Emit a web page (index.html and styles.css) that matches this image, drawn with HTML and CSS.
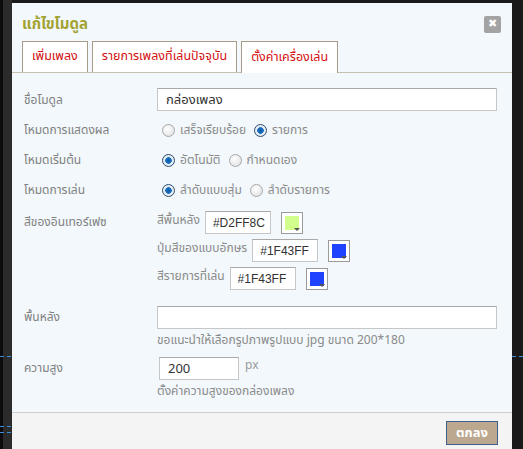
FILE: index.html
```html
<!DOCTYPE html>
<html lang="th">
<head>
    <meta charset="UTF-8">
    <title>แก้ไขโมดูล</title>
    <link rel="stylesheet" href="styles.css">
</head>
<body>

<div class="guide guide-l1"></div>
<div class="guide guide-l2"></div>
<div class="guide guide-l3"></div>
<div class="guide guide-r1"></div>

<div id="dialog">
    <div class="dlg-head">
        <span class="dlg-title">แก้ไขโมดูล</span>
        <span class="dlg-close">&#10006;</span>
    </div>

    <div class="tabs">
        <div class="tab">เพิ่มเพลง</div>
        <div class="tab">รายการเพลงที่เล่นปัจจุบัน</div>
        <div class="tab active">ตั้งค่าเครื่องเล่น</div>
    </div>

    <div class="dlg-body">
        <div class="row">
            <div class="label">ชื่อโมดูล</div>
            <input type="text" class="field wide" value="กล่องเพลง">
        </div>

        <div class="row">
            <div class="label">โหมดการแสดงผล</div>
            <div class="radios">
                <span class="radio"></span><span class="opt">เสร็จเรียบร้อย</span>
                <span class="radio on"></span><span class="opt">รายการ</span>
            </div>
        </div>

        <div class="row">
            <div class="label">โหมดเริ่มต้น</div>
            <div class="radios">
                <span class="radio on"></span><span class="opt">อัตโนมัติ</span>
                <span class="radio"></span><span class="opt">กำหนดเอง</span>
            </div>
        </div>

        <div class="row">
            <div class="label">โหมดการเล่น</div>
            <div class="radios">
                <span class="radio on"></span><span class="opt">ลำดับแบบสุ่ม</span>
                <span class="radio"></span><span class="opt">ลำดับรายการ</span>
            </div>
        </div>

        <div class="row top colors">
            <div class="label">สีของอินเทอร์เฟซ</div>
            <div class="color-list">
                <div class="color-row">
                    <span class="sub">สีพื้นหลัง</span>
                    <input type="text" class="field hex" value="#D2FF8C">
                    <span class="swatch"><i style="background:#D2FF8C"></i></span>
                </div>
                <div class="color-row">
                    <span class="sub">ปุ่มสีของแบบอักษร</span>
                    <input type="text" class="field hex" value="#1F43FF">
                    <span class="swatch"><i style="background:#1F43FF"></i></span>
                </div>
                <div class="color-row">
                    <span class="sub">สีรายการที่เล่น</span>
                    <input type="text" class="field hex" value="#1F43FF">
                    <span class="swatch"><i style="background:#1F43FF"></i></span>
                </div>
            </div>
        </div>

        <div class="row top bg-row">
            <div class="label">พื้นหลัง</div>
            <div class="col">
                <input type="text" class="field wide" value="">
                <div class="hint">ขอแนะนำให้เลือกรูปภาพรูปแบบ jpg ขนาด 200*180</div>
            </div>
        </div>

        <div class="row top">
            <div class="label">ความสูง</div>
            <div class="col">
                <div class="inline">
                    <input type="text" class="field short" value="200">
                    <span class="unit">px</span>
                </div>
                <div class="hint">ตั้งค่าความสูงของกล่องเพลง</div>
            </div>
        </div>
    </div>

    <div class="dlg-foot">
        <button class="btn-ok">ตกลง</button>
    </div>
</div>

</body>
</html>
```

FILE: styles.css
```css
body {
    margin: 0;
    height: 449px;
    overflow: hidden;
    background: linear-gradient(to right, #0c0c0c 0, #0c0c0c 3px, #2b2b2b 3px, #2b2b2b 12px, #1a1a1a 12px);
    font-family: "Noto Sans Thai", Tahoma, "Noto Sans", "DejaVu Sans", sans-serif;
    font-size: 12px;
    line-height: 16px;
    position: relative;
}
.guide {
    position: absolute;
    height: 1px;
    width: 11px;
    background: repeating-linear-gradient(to right, #3d8fd9 0, #3d8fd9 4px, transparent 4px, transparent 7px);
}
.guide-l1 { left: 0; top: 356px; }
.guide-l2 { left: 0; top: 426px; }
.guide-l3 { left: 0; top: 432px; }
.guide-r1 { right: 0; top: 356px; }

#dialog {
    margin: 3px 0 0 12px;
    width: 500px;
    height: 446px;
    background: #f2f8fc;
    display: flex;
    flex-direction: column;
    overflow: hidden;
}
.dlg-head {
    height: 38px;
    box-sizing: border-box;
    display: flex;
    align-items: center;
    justify-content: space-between;
    padding: 6px 11px 0 10px;
    flex-shrink: 0;
}
.dlg-title {
    color: #a3a232;
    font-size: 15px;
    line-height: 20px;
    font-weight: bold;
}
.dlg-close {
    width: 17px;
    height: 17px;
    background: #a3a3a3;
    border-radius: 2px;
    color: #fff;
    font-size: 11px;
    font-weight: bold;
    display: flex;
    align-items: center;
    justify-content: center;
    margin-top: -2px;
}
.tabs {
    display: flex;
    gap: 4px;
    padding-left: 10px;
    border-bottom: 1px solid #c9bfae;
    height: 31px;
    flex-shrink: 0;
}
.tab {
    border: 1px solid #a89c86;
    border-bottom: none;
    background: #fff;
    color: #d20f0f;
    font-size: 12.5px;
    padding: 0 9px;
    display: flex;
    align-items: center;
    height: 31px;
    box-sizing: border-box;
}
.tab.active {
    height: 32px;
    margin-bottom: -1px;
}
.dlg-body {
    flex: 1 1 0;
    min-height: 0;
    overflow: hidden;
    padding: 15px 15px 0 12px;
}
.row {
    display: flex;
    align-items: center;
    min-height: 22px;
    margin-bottom: 8px;
}
.row.top {
    align-items: flex-start;
}
.label {
    width: 133px;
    flex-shrink: 0;
    color: #808080;
}
.row.top .label {
    padding-top: 3px;
}
.field {
    height: 23px;
    box-sizing: border-box;
    border: 1px solid #c6c6c6;
    border-top-color: #a9a9a9;
    background: #fff;
    font-family: inherit;
    font-size: 13px;
    color: #333;
    padding: 0 8px;
    outline: none;
}
.wide {
    width: 340px;
}
.radios {
    display: flex;
    align-items: center;
    padding-left: 5px;
}
.radio {
    width: 11px;
    height: 11px;
    border-radius: 50%;
    border: 1px solid #a7a7a7;
    background: radial-gradient(circle at 40% 35%, #fff, #dcdcdc);
    margin-right: 5px;
}
.radio.on {
    border-color: #2e4c6e;
    background: radial-gradient(circle at 50% 50%, #0f5ba6 0, #1b72c2 3px, #dfe8f0 3.5px, #f6f9fc);
}
.opt {
    color: #8a8a8a;
    margin-right: 8px;
}
.colors {
    margin-top: 10px;
    margin-bottom: 16px;
}
.color-list {
    display: flex;
    flex-direction: column;
    gap: 5px;
}
.color-row {
    display: flex;
    align-items: center;
}
.sub {
    color: #8a8a8a;
    margin-top: -6px;
    margin-right: 5px;
}
.hex {
    width: 66px;
    padding: 0 0 0 7px;
    font-family: "Liberation Sans", sans-serif;
    font-size: 12px;
}
.swatch {
    width: 22px;
    height: 22px;
    box-sizing: border-box;
    border: 1px solid #9a9a9a;
    background: #fff;
    padding: 3px;
    margin-left: 10px;
    position: relative;
}
.swatch i {
    display: block;
    width: 100%;
    height: 100%;
}
.swatch::after {
    content: "";
    position: absolute;
    right: 2px;
    bottom: 2px;
    border-left: 3px solid transparent;
    border-right: 3px solid transparent;
    border-top: 3px solid #555;
}
.col {
    display: flex;
    flex-direction: column;
}
.hint {
    color: #8a8a8a;
    margin-top: 3px;
}
.bg-row {
    margin-bottom: 9px;
}
.inline {
    display: flex;
    align-items: flex-start;
    margin-left: 2px;
}
.short {
    width: 80px;
}
.unit {
    color: #9a9a9a;
    margin-left: 6px;
}
.dlg-foot {
    height: 37px;
    flex-shrink: 0;
    border-top: 1px solid #cfcfcf;
    background: #f4f4f4;
    display: flex;
    justify-content: flex-end;
    align-items: flex-start;
    padding: 8px 14px 0 0;
    box-sizing: border-box;
}
.btn-ok {
    width: 52px;
    height: 24px;
    background: #bba88e;
    border: 1px solid #3f5f8c;
    color: #fff;
    font-family: inherit;
    font-weight: bold;
    font-size: 13px;
    padding: 0;
}
```
